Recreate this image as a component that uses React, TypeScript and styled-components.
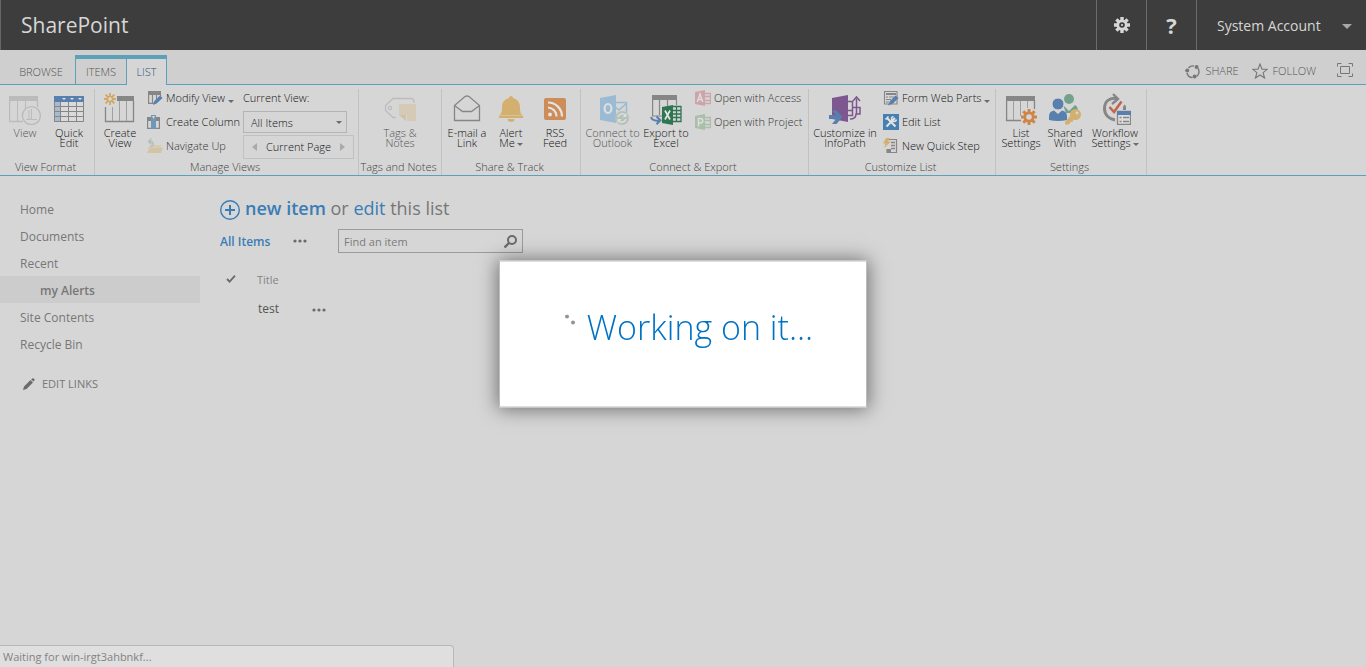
import React from "react";
import styled, { createGlobalStyle } from "styled-components";

const Global = createGlobalStyle`
  * { box-sizing: border-box; }
  body {
    margin: 0;
    min-height: 100vh;
    background: #d6d6d6;
    color: #777;
    font: 12px/16px "Open Sans", "Noto Sans", sans-serif;
  }
  button, input, select { font: inherit; color: inherit; }
  button { border: 0; padding: 0; background: none; cursor: pointer; }
  a { color: inherit; text-decoration: none; }
  h1, h2, p { margin: 0; font-weight: inherit; }
  svg { display: block; flex: none; }
`;

/* ---------- suite bar ---------- */
const SuiteBar = styled.header`
  display: flex;
  align-items: stretch;
  height: 50px;
  background: #3d3d3d;
  border-left: 1px solid #666;
  color: #d6d6d6;
`;
const Brand = styled.a`
  flex: 1;
  padding-left: 20px;
  font-size: 21px;
  line-height: 50px;
`;
const SuiteButton = styled.button`
  display: flex;
  align-items: center;
  justify-content: center;
  width: 50px;
  border-left: 1px solid #6b6b6b;
  font-size: 22px;
  font-weight: 700;
`;
const AccountButton = styled(SuiteButton)`
  width: 170px;
  justify-content: space-between;
  padding: 2px 14px 0 20px;
  font-size: 14px;
  font-weight: 400;
`;

/* ---------- ribbon tabs ---------- */
const TabRow = styled.div`
  display: flex;
  align-items: flex-end;
  height: 35px;
  background: #cfcfcf;
  box-shadow: inset 0 -1px #5ba2b8;
  color: #555;
  font-weight: 300;
`;
const Tabs = styled.nav`
  display: flex;
  flex: 1;
  padding-left: 7px;
`;
const Tab = styled.button<{ $w: number; $kind?: "first" | "active" }>`
  width: ${(p) => p.$w}px;
  height: 30px;
  padding-top: ${(p) => (p.$kind ? 0 : 4)}px;
  font-size: 11px;
  border-top: ${(p) => (p.$kind ? "4px solid #5ba2b8" : "0")};
  border-left: ${(p) => (p.$kind ? "1px solid #5ba2b8" : "0")};
  border-right: ${(p) => (p.$kind === "active" ? "1px solid #5ba2b8" : "0")};
  background: ${(p) => (p.$kind === "active" ? "#d6d6d6" : "transparent")};
  color: ${(p) => (p.$kind === "active" ? "#2f5580" : "#555")};
`;
const PageActions = styled.div`
  display: flex;
  align-items: center;
  gap: 13px;
  height: 28px;
  padding-right: 13px;
`;
const PageAction = styled.button`
  display: flex;
  align-items: center;
  gap: 5px;
  font-size: 11px;
`;
const FocusAction = styled(PageAction)`
  margin: 0 0 3px 8px;
`;

/* ---------- ribbon ---------- */
const Ribbon = styled.div`
  display: flex;
  height: 91px;
  border-bottom: 1px solid #5ba2b8;
  color: #444;
  font-weight: 300;
`;
const Group = styled.section<{ $w: number }>`
  display: flex;
  flex-direction: column;
  flex: none;
  width: ${(p) => p.$w}px;
  margin-top: 4px;
  border-right: 1px solid #c2c2c2;
`;
const GroupBody = styled.div<{ $center?: boolean }>`
  display: flex;
  height: 70px;
  padding-left: ${(p) => (p.$center ? 0 : 3)}px;
  justify-content: ${(p) => (p.$center ? "center" : "flex-start")};
`;
const GroupLabel = styled.h2`
  padding-right: 3px;
  font-size: 11px;
  line-height: 16px;
  text-align: center;
  white-space: nowrap;
`;
const BigButton = styled.button<{ $w: number }>`
  display: flex;
  flex-direction: column;
  align-items: center;
  flex: none;
  width: ${(p) => p.$w}px;
  padding-top: 4px;
  gap: 3px;
  color: #111;
  font-size: 11px;
  line-height: 10px;
  white-space: nowrap;
  &:disabled { color: #555; }
`;
const SmallColumn = styled.div<{ $gap?: number; $w?: number }>`
  display: flex;
  flex-direction: column;
  width: ${(p) => (p.$w ? p.$w + "px" : "auto")};
  margin-left: ${(p) => p.$gap ?? 5}px;
  margin-top: -3px;
`;
const SmallButton = styled.button`
  display: flex;
  align-items: center;
  gap: 3px;
  height: 24px;
  color: #111;
  font-size: 11px;
  white-space: nowrap;
  &:disabled { color: #333; }
`;
const ViewPicker = styled.div`
  display: flex;
  flex-direction: column;
  width: 111px;
  margin-left: 7px;
  margin-top: -3px;
  color: #111;
  font-size: 11px;
`;
const PickerLabel = styled.label`
  height: 26px;
  line-height: 24px;
`;
const SelectWrap = styled.div`
  display: flex;
  align-items: center;
  width: 104px;
  height: 22px;
  padding-right: 4px;
  border: 1px solid #b4b4b4;
  margin-bottom: 2px;
`;
const Select = styled.select`
  appearance: none;
  flex: 1;
  height: 20px;
  padding: 2px 0 0 7px;
  border: 0;
  background: none;
`;
const Pager = styled.div`
  display: flex;
  align-items: center;
  justify-content: space-between;
  height: 24px;
  padding: 0 8px;
  border: 1px solid #c0c0c0;
`;

/* ---------- page body ---------- */
const Body = styled.div`
  display: flex;
  padding-top: 19px;
`;
const Side = styled.nav`
  flex: none;
  width: 200px;
`;
const NavLink = styled.a<{ $current?: boolean }>`
  display: block;
  padding: 2px 0 0 ${(p) => (p.$current ? 40 : 20)}px;
  line-height: 25px;
  background: ${(p) => (p.$current ? "#cccccc" : "none")};
  font-weight: ${(p) => (p.$current ? 600 : 400)};
`;
const EditLinks = styled.button`
  display: flex;
  align-items: center;
  gap: 7px;
  padding: 19px 0 0 22px;
  font-size: 11px;
`;
const Main = styled.main`
  flex: 1;
  padding-left: 20px;
`;
const Hero = styled.h1`
  display: flex;
  align-items: center;
  gap: 5px;
  height: 26px;
  font-size: 18px;
  a { color: #3a7cb5; }
  a:first-child { font-weight: 600; }
`;
const HeroIcon = styled.span`
  padding-top: 3px;
`;
const Toolbar = styled.div`
  display: flex;
  align-items: center;
  height: 24px;
  margin-top: 8px;
`;
const ViewLink = styled.a`
  width: 73px;
  padding-top: 2px;
  color: #3a7cb5;
  font-weight: 600;
`;
const SearchBox = styled.form`
  display: flex;
  align-items: center;
  width: 185px;
  height: 24px;
  margin-left: 31px;
  padding: 0 5px;
  border: 1px solid #9b9b9b;
`;
const SearchInput = styled.input`
  flex: 1;
  min-width: 0;
  padding: 2px 0 0;
  border: 0;
  background: none;
  font-size: 11px;
  &::placeholder { color: #7b7b7b; opacity: 1; }
`;
const Table = styled.table`
  margin-top: 12px;
  border-collapse: collapse;
  th, td { height: 29px; padding: 0; text-align: left; font-weight: 400; }
  th { font-size: 11px; color: #848484; }
  td { color: #555; }
  th:first-child { width: 37px; padding-left: 6px; }
  th:nth-child(2) { width: 55px; }
  td:nth-child(2) { padding-left: 1px; }
  td:last-child { padding-top: 3px; }
`;
const DotsButton = styled.button`
  display: block;
`;

/* ---------- overlays ---------- */
const Dialog = styled.div`
  position: fixed;
  top: 50%;
  left: 50%;
  transform: translate(-50%, -50%);
  display: flex;
  justify-content: center;
  gap: 11px;
  width: 368px;
  height: 147px;
  padding: 41px 0 0 12px;
  background: #fff;
  border: 1px solid #bdbdbd;
  box-shadow: 0 0 18px 1px rgba(0, 0, 0, 0.5);
  color: #0072c6;
  font-size: 34px;
  font-weight: 300;
  line-height: 48px;
  white-space: nowrap;
`;
const Spinner = styled.span`
  padding-top: 12px;
`;
const StatusBar = styled.div`
  position: fixed;
  left: 0;
  bottom: 0;
  width: 454px;
  height: 22px;
  padding-left: 3px;
  background: #dfdfdf;
  border: solid #b8b8b8;
  border-width: 1px 1px 0 0;
  border-top-right-radius: 4px;
  color: #828282;
  font-size: 11px;
  line-height: 22px;
`;

/* ---------- icons ---------- */
const G = "#868686";

const Svg = ({ w = 32, h = w, children }: { w?: number; h?: number; children: React.ReactNode }) => (
  <svg width={w} height={h} viewBox={`0 0 ${w} ${h}`} fill="none" aria-hidden="true">
    {children}
  </svg>
);

const Caret = ({ w = 6, color = "#6b6b6b" }: { w?: number; color?: string }) => (
  <svg width={w} height={w / 2} viewBox="0 0 6 3" aria-hidden="true">
    <path d="M0 0h6L3 3z" fill={color} />
  </svg>
);
const InlineCaret = styled.span`
  display: inline-block;
  margin-left: 2px;
  vertical-align: middle;
`;
const DropCaret = styled.span`
  padding: 6px 0 0;
`;

const Dots = () => (
  <Svg w={14} h={4}>
    <circle cx="2" cy="2" r="1.6" fill="#6b6b6b" />
    <circle cx="7" cy="2" r="1.6" fill="#6b6b6b" />
    <circle cx="12" cy="2" r="1.6" fill="#6b6b6b" />
  </Svg>
);

const GearIcon = () => (
  <Svg w={16}>
    <g stroke="#d6d6d6" strokeWidth="3.4">
      <path d="M8 0v16M0 8h16M2.4 2.4l11.2 11.2M13.6 2.4L2.4 13.6" />
    </g>
    <circle cx="8" cy="8" r="5.6" fill="#d6d6d6" />
    <circle cx="8" cy="8" r="2.8" fill="#3d3d3d" />
    <circle cx="8" cy="8" r="1.1" fill="#d6d6d6" />
  </Svg>
);

const ShareIcon = () => (
  <Svg w={15}>
    <path d="M3.500 4A5.800 5.800 0 0 1 9 2M13 4.500a5.800 5.800 0 0 1-1.500 8M7.500 13.600A5.800 5.800 0 0 1 2 9" stroke="#777" strokeWidth="1.400" />
    <circle cx="11.600" cy="3" r="2" fill="#777" />
    <circle cx="2.200" cy="6.600" r="2" fill="#777" />
    <circle cx="9.600" cy="12.600" r="2" fill="#777" />
  </Svg>
);
const StarIcon = () => (
  <Svg w={16}>
    <path d="M8 1l2 5.100 5.200.2-4.100 3.400 1.500 5.300L8 12l-4.600 3 1.500-5.300L.8 6.300 6 6.100z" stroke="#777" strokeWidth="1.100" />
  </Svg>
);
const FocusIcon = () => (
  <Svg w={16} h={14}>
    <path d="M.5 3.500v-3h4M11.500.5h4v3M15.500 10.500v3h-4M4.500 13.500h-4v-3" stroke="#777" />
    <path d="M3.500 3.500h9v7h-9z" stroke="#777" />
  </Svg>
);

const ViewIcon = () => (
  <Svg>
    <g stroke="#bbb">
      <path d="M.5 7v21.500H14M28.500 7v7" strokeWidth="1.400" />
      <path d="M8.500 8v20M16.500 8v8" />
      <path d="M22.500 16v10M17 26.500h11M20 26v-9" />
      <circle cx="22.400" cy="22.600" r="9" strokeWidth="1.400" />
    </g>
    <path d="M0 3h29v5H0z" fill="#bbb" />
  </Svg>
);
const QuickEditIcon = () => (
  <Svg>
    <path d="M1 3h30v26H1z" fill="#dadada" />
    <path d="M1 9h6v20H1z" fill="#a8bacb" />
    <path d="M1 3h30v6H1z" fill="#587fae" />
    <path d="M9 5h4l-2 2zM17 5h4l-2 2zM25 5h4l-2 2z" fill="#e4e4e4" />
    <path d="M1.500 9v19.500h29V9M7.500 9v20M15.500 9v20M23.500 9v20M1 13.500h30M1 18.500h30M1 23.500h30" stroke={G} />
  </Svg>
);
const CreateViewIcon = () => (
  <Svg>
    <path d="M13 3h17v5H13z" fill={G} />
    <path d="M1.500 14v14.500h28V8" stroke={G} strokeWidth="1.300" />
    <path d="M8.500 14v14M15.500 8v20M22.500 8v20" stroke="#a0a0a0" />
    <path d="M6 0v4M6 8v4M0 6h4M8 6h4M1.600 1.600l3 3M7.400 7.400l3 3M10.400 1.600l-3 3M4.600 7.400l-3 3" stroke="#d2a85e" strokeWidth="1.800" />
    <circle cx="6" cy="6" r="2.600" stroke="#d2a85e" strokeWidth="1.400" />
  </Svg>
);
const ModifyIcon = () => (
  <Svg w={16}>
    <path d="M1 1h13v4H1z" fill={G} />
    <path d="M1.600 4v9.400H7M5.500 5v8M9.500 5v4M13.500 4v2" stroke={G} strokeWidth="1.200" />
    <path d="M6 15l1.400-4L13 5.500l2.600 2.500-6 5.600z" fill="#587fae" />
  </Svg>
);
const ColumnIcon = () => (
  <Svg w={16}>
    <path d="M0 3h13v4H0z" fill={G} />
    <path d="M.6 4v10.400h11.800V4" stroke={G} strokeWidth="1.200" />
    <path d="M4 1h5v14H4z" fill="#7296b8" />
    <path d="M5 2h3L6.500 5z" fill="#d6d6d6" />
  </Svg>
);
const NavigateIcon = () => (
  <Svg w={16}>
    <path d="M1 9h4l1-2h8v8H1z" fill="#d8cbb2" />
    <path d="M0 15l3-5h13l-2 5z" fill="#d3c4a6" />
    <path d="M3 8.500c4 0 4-4 1-5H2M4.500.5L1.500 3.500l3 3" stroke="#b3beb9" strokeWidth="1.400" />
  </Svg>
);
const TagsIcon = () => (
  <Svg>
    <path d="M12 24.500H9L1.500 17.500v-5L9 5.500h18a3 3 0 0 1 3 3V10" stroke="#bcbcbc" strokeWidth="1.300" />
    <circle cx="6" cy="15" r="1.700" stroke="#bcbcbc" strokeWidth="1.200" />
    <path d="M15 11h17v17h-9v-6h-8z" fill="#d5cab5" />
    <path d="M15 22h7v6z" fill="#d0c2a5" />
  </Svg>
);
const MailIcon = () => (
  <Svg>
    <path d="M3.500 12.500L14 3.500q2-1 4 0l10.500 9v15h-25z" stroke={G} strokeWidth="1.300" />
    <path d="M3.500 12.500L11.500 18.500h9l8-6" stroke={G} strokeWidth="1.300" />
  </Svg>
);
const BellIcon = () => (
  <Svg>
    <path d="M16 3a2 2 0 0 1 2 2c4 1 7 4 7 9 0 4 0 6 3 9v2H4v-2c3-3 3-5 3-9 0-5 3-8 7-9a2 2 0 0 1 2-2z" fill="#d3b070" />
    <path d="M12.500 26h7a3.500 3 0 0 1-7 0z" fill="#d3b070" />
    <path d="M4 22.500h24" stroke="#d8c399" />
  </Svg>
);
const RssIcon = () => (
  <Svg>
    <rect x="5" y="5" width="22" height="22" rx="2" fill="#cd8d59" />
    <circle cx="11" cy="21.500" r="2" fill="#e4e4e4" />
    <path d="M9 14.500a9 9 0 0 1 8.500 9M9 9.500a14 14 0 0 1 14 14" stroke="#e4e4e4" strokeWidth="2.200" />
  </Svg>
);
const OutlookIcon = () => (
  <Svg>
    <path d="M18 9.500h11.500V24H18M18 14l4 3 8-7" stroke="#9bbbd4" strokeWidth="1.500" />
    <path d="M3 5l16-3v28L3 27z" fill="#9bbbd4" />
    <ellipse cx="11" cy="15.500" rx="3.400" ry="4.500" stroke="#dedede" strokeWidth="2.200" />
    <circle cx="25" cy="25" r="7" fill="#b5c2b9" />
    <path d="M21 24a4.300 4.300 0 0 1 7.500-1.500M29 26a4.300 4.300 0 0 1-7.500 1.500" stroke="#dedede" strokeWidth="1.500" />
    <path d="M29.500 20v4h-4zM20.500 30v-4h4z" fill="#dedede" />
  </Svg>
);
const ExcelIcon = () => (
  <Svg>
    <path d="M2 2h25v5H2z" fill={G} />
    <path d="M2.600 6v17H13M9.500 7v15M17.500 7v6M26.500 6v6" stroke={G} strokeWidth="1.200" />
    <path d="M22 13.500h9v15h-9M22 17.500h9M22 21h9M22 24.500h9M26.500 14v14" stroke="#2f7550" strokeWidth="1.300" />
    <path d="M12 14l11-2v20l-11-2z" fill="#2f7550" />
    <path d="M15 17.500l5 9M20 17.500l-5 9" stroke="#e4e4e4" strokeWidth="1.700" />
    <path d="M1 24c1 3 4 4 8 3.500M6.500 23.500l4 3.800-4 4" stroke="#587fae" strokeWidth="2" />
  </Svg>
);
const LetterIcon = ({ color, kind }: { color: string; kind: "access" | "project" }) => (
  <Svg w={16}>
    <path d="M8 3.500h7.500v10H8M10 6.500h5M10 10.500h5" stroke={color} strokeWidth="1.300" />
    <path d="M0 2l10-2v16L0 14z" fill={color} />
    {kind === "access" ? (
      <path d="M2.300 12L5 4l2.700 8M3.200 9.500h3.600" stroke="#dedede" strokeWidth="1.400" />
    ) : (
      <path d="M3.500 12.500v-8h2a2 2 0 0 1 0 4.500h-2" stroke="#dedede" strokeWidth="1.500" />
    )}
  </Svg>
);
const InfoPathIcon = () => (
  <Svg>
    <path d="M18 8.500h5.500v14H18M27.500 21V5.500M18 17.500h5.500M23.500 14.500h7.500v6.500h-4c0 3-2 5-6 5" stroke="#7c5790" strokeWidth="1.500" />
    <path d="M24 8l3.500-4L31 8" stroke="#7c5790" strokeWidth="1.500" />
    <path d="M3 5l16-3v27L3 26z" fill="#7c5790" />
    <path d="M0 22h7l-4-4.500h4.500l6 6.500-6 7H3l4-5H0z" fill="#587fae" />
  </Svg>
);
const WebPartsIcon = () => (
  <Svg w={16}>
    <path d="M1.500 1.500h12.500v12.500h-12.500z" stroke={G} strokeWidth="1.100" />
    <path d="M3 3h10v2H3z" fill={G} />
    <path d="M3 7h2M6 7h5M3 9.500h5M3 12h3" stroke={G} strokeWidth="1.200" />
    <path d="M5 15.500l2-4.500 5.500-5.500L15.500 8 10 13.500z" fill="#587fae" />
  </Svg>
);
const EditListIcon = () => (
  <Svg w={16}>
    <path d="M0 0h16v16H0z" fill="#467fb2" />
    <path d="M4 4l8.500 8.500M12 4l-8.500 8.500" stroke="#e4e4e4" strokeWidth="2" />
    <path d="M2.500 5.500l3-3M10.500 2.500a2.500 2.500 0 1 0 3 3" stroke="#e4e4e4" strokeWidth="1.600" />
  </Svg>
);
const QuickStepIcon = () => (
  <Svg w={16}>
    <path d="M6 1.500h7.500v13H4V11" stroke={G} strokeWidth="1.200" />
    <path d="M8 4.500h4M8 7.500h4M8 10.500h4" stroke={G} strokeWidth="1.300" />
    <path d="M4 11h4v4H4z" fill={G} />
    <path d="M3 0h4L5 3.500h3L1 10l1.500-4.500H0z" fill="#d3b070" />
  </Svg>
);
const ListSettingsIcon = () => (
  <Svg>
    <path d="M1 3h29v5H1z" fill={G} />
    <path d="M1.600 7v20.500H16M29.500 7v9" stroke={G} strokeWidth="1.300" />
    <path d="M8.500 8v19M15.500 8v15M22.500 8v7" stroke="#a0a0a0" />
    <path d="M24 16v16M16 24h16M18.300 18.300l11.400 11.400M29.700 18.300L18.300 29.700" stroke="#cd8549" strokeWidth="3" />
    <circle cx="24" cy="24" r="5.600" fill="#cd8549" />
    <circle cx="24" cy="24" r="2.800" fill="#d6d6d6" />
  </Svg>
);
const SharedIcon = () => (
  <Svg>
    <circle cx="20" cy="6" r="5" fill="#74a18c" />
    <path d="M14 12l6 6 6-6c2 1 3 3 3 6v2H17z" fill="#74a18c" />
    <circle cx="9" cy="11" r="6" fill="#587fae" stroke="#d6d6d6" />
    <path d="M0 27v-4c0-3 2-5 5-5.500l4 3.500 4-3.500c3 .5 5 2.500 5 5.500v4q-9 2-18 0z" fill="#587fae" />
    <path d="M22 22l-6 7 .5 3 4-1 1-2h2l1-3z" fill="#d3b070" />
    <circle cx="26.500" cy="21.500" r="5.500" fill="#d3b070" />
    <circle cx="28" cy="20" r="1.400" fill="#d6d6d6" />
  </Svg>
);
const WorkflowIcon = () => (
  <Svg>
    <path d="M18 5.500C10 4 5.500 9 5.500 15.500S10 26 16 27" stroke={G} strokeWidth="3" />
    <path d="M14 1l5 5-6 5" stroke={G} strokeWidth="2.400" />
    <path d="M10.500 14l4.500 5L22.500 8.500" stroke="#c0664c" strokeWidth="2.600" />
    <path d="M24 17v-3q2-5 3 0v3z" fill={G} />
    <path d="M18.500 18.500h13v13h-13z" fill="#dcdcdc" stroke={G} strokeWidth="1.300" />
    <path d="M18 18h14v4H18z" fill="#587fae" />
    <path d="M20.500 24.500h2M20.500 28.500h2M24 24.500h6M24 28.500h6" stroke={G} strokeWidth="1.400" />
  </Svg>
);
const PencilIcon = () => (
  <Svg w={13}>
    <path d="M1 12l1-3.500L8.500 2 11 4.500 4.500 11zM9.200 1.400l1-1q1-.6 1.900.3t.3 1.900l-1 1z" fill="#6b6b6b" />
  </Svg>
);
const PlusIcon = () => (
  <Svg w={20}>
    <circle cx="10" cy="10" r="9.300" stroke="#3a7cb5" strokeWidth="1.400" />
    <path d="M10 5v10M5 10h10" stroke="#3a7cb5" strokeWidth="2" />
  </Svg>
);
const SearchIcon = () => (
  <Svg w={13}>
    <circle cx="8" cy="5" r="4" stroke="#6b6b6b" strokeWidth="2" />
    <path d="M5 8l-4.500 4.500" stroke="#6b6b6b" strokeWidth="2.400" />
  </Svg>
);
const CheckIcon = () => (
  <Svg w={10} h={9}>
    <path d="M1 4l2.600 2.600L9 .6" stroke="#6b6b6b" strokeWidth="1.800" />
  </Svg>
);
const PageArrow = ({ flip }: { flip?: boolean }) => (
  <Svg w={6} h={8}>
    <path d={flip ? "M1 0v8l5-4z" : "M5 0v8L0 4z"} fill="#aaa" />
  </Svg>
);

/* ---------- page ---------- */
type BigProps = { icon: React.ReactNode; w?: number; lines: string[]; off?: boolean; menu?: boolean };
const Big = ({ icon, w = 44, lines, off, menu }: BigProps) => (
  <BigButton $w={w} disabled={off}>
    {icon}
    <span>
      {lines[0]}
      {lines[1] && <br />}
      {lines[1]}
      {menu && <InlineCaret><Caret /></InlineCaret>}
    </span>
  </BigButton>
);
type SmallProps = { icon: React.ReactNode; text: string; off?: boolean; menu?: boolean };
const Small = ({ icon, text, off, menu }: SmallProps) => (
  <SmallButton disabled={off}>
    {icon}
    <span>{text}</span>
    {menu && <DropCaret><Caret w={6} /></DropCaret>}
  </SmallButton>
);

export default function App() {
  return (
    <>
      <Global />
      <SuiteBar>
        <Brand href="#">SharePoint</Brand>
        <SuiteButton aria-label="Settings"><GearIcon /></SuiteButton>
        <SuiteButton aria-label="Help">?</SuiteButton>
        <AccountButton>
          System Account
          <Caret w={10} color="#a8a8a8" />
        </AccountButton>
      </SuiteBar>

      <TabRow>
        <Tabs>
          <Tab $w={68}>BROWSE</Tab>
          <Tab $w={51} $kind="first">ITEMS</Tab>
          <Tab $w={41} $kind="active">LIST</Tab>
        </Tabs>
        <PageActions>
          <PageAction><ShareIcon />SHARE</PageAction>
          <PageAction><StarIcon />FOLLOW</PageAction>
          <FocusAction aria-label="Focus on content"><FocusIcon /></FocusAction>
        </PageActions>
      </TabRow>

      <Ribbon>
        <Group $w={95}>
          <GroupBody>
            <Big icon={<ViewIcon />} lines={["View"]} off />
            <Big icon={<QuickEditIcon />} lines={["Quick", "Edit"]} />
          </GroupBody>
          <GroupLabel>View Format</GroupLabel>
        </Group>
        <Group $w={264}>
          <GroupBody>
            <Big icon={<CreateViewIcon />} lines={["Create", "View"]} />
            <SmallColumn $w={89}>
              <Small icon={<ModifyIcon />} text="Modify View" menu />
              <Small icon={<ColumnIcon />} text="Create Column" />
              <Small icon={<NavigateIcon />} text="Navigate Up" off />
            </SmallColumn>
            <ViewPicker>
              <PickerLabel htmlFor="view">Current View:</PickerLabel>
              <SelectWrap>
                <Select id="view"><option>All Items</option></Select>
                <Caret w={6} />
              </SelectWrap>
              <Pager>
                <button aria-label="Previous page"><PageArrow /></button>
                <span>Current Page</span>
                <button aria-label="Next page"><PageArrow flip /></button>
              </Pager>
            </ViewPicker>
          </GroupBody>
          <GroupLabel>Manage Views</GroupLabel>
        </Group>
        <Group $w={83}>
          <GroupBody $center>
            <Big icon={<TagsIcon />} lines={["Tags &", "Notes"]} off />
          </GroupBody>
          <GroupLabel>Tags and Notes</GroupLabel>
        </Group>
        <Group $w={139}>
          <GroupBody>
            <Big icon={<MailIcon />} lines={["E-mail a", "Link"]} />
            <Big icon={<BellIcon />} lines={["Alert", "Me"]} menu />
            <Big icon={<RssIcon />} lines={["RSS", "Feed"]} />
          </GroupBody>
          <GroupLabel>Share &amp; Track</GroupLabel>
        </Group>
        <Group $w={228}>
          <GroupBody>
            <Big icon={<OutlookIcon />} w={57} lines={["Connect to", "Outlook"]} off />
            <Big icon={<ExcelIcon />} w={50} lines={["Export to", "Excel"]} />
            <SmallColumn $gap={4}>
              <Small icon={<LetterIcon color="#cda4ab" kind="access" />} text="Open with Access" off />
              <Small icon={<LetterIcon color="#a9bfa9" kind="project" />} text="Open with Project" off />
            </SmallColumn>
          </GroupBody>
          <GroupLabel>Connect &amp; Export</GroupLabel>
        </Group>
        <Group $w={187}>
          <GroupBody>
            <Big icon={<InfoPathIcon />} w={66} lines={["Customize in", "InfoPath"]} />
            <SmallColumn>
              <Small icon={<WebPartsIcon />} text="Form Web Parts" menu />
              <Small icon={<EditListIcon />} text="Edit List" />
              <Small icon={<QuickStepIcon />} text="New Quick Step" />
            </SmallColumn>
          </GroupBody>
          <GroupLabel>Customize List</GroupLabel>
        </Group>
        <Group $w={151}>
          <GroupBody>
            <Big icon={<ListSettingsIcon />} lines={["List", "Settings"]} />
            <Big icon={<SharedIcon />} lines={["Shared", "With"]} />
            <Big icon={<WorkflowIcon />} w={56} lines={["Workflow", "Settings"]} menu />
          </GroupBody>
          <GroupLabel>Settings</GroupLabel>
        </Group>
      </Ribbon>

      <Body>
        <Side>
          <NavLink href="#">Home</NavLink>
          <NavLink href="#">Documents</NavLink>
          <NavLink href="#">Recent</NavLink>
          <NavLink href="#" $current>my Alerts</NavLink>
          <NavLink href="#">Site Contents</NavLink>
          <NavLink href="#">Recycle Bin</NavLink>
          <EditLinks><PencilIcon />EDIT LINKS</EditLinks>
        </Side>
        <Main>
          <Hero>
            <HeroIcon><PlusIcon /></HeroIcon>
            <span><a href="#">new item</a> or <a href="#edit">edit</a> this list</span>
          </Hero>
          <Toolbar>
            <ViewLink href="#">All Items</ViewLink>
            <DotsButton aria-label="More views"><Dots /></DotsButton>
            <SearchBox>
              <SearchInput aria-label="Find an item" placeholder="Find an item" />
              <button type="button" aria-label="Search"><SearchIcon /></button>
            </SearchBox>
          </Toolbar>
          <Table>
            <thead>
              <tr><th><CheckIcon /></th><th>Title</th><th /></tr>
            </thead>
            <tbody>
              <tr><td /><td>test</td><td><DotsButton aria-label="Item menu"><Dots /></DotsButton></td></tr>
            </tbody>
          </Table>
        </Main>
      </Body>

      <Dialog role="dialog" aria-label="Working on it">
        <Spinner>
          <Svg w={11} h={12}>
            <circle cx="2" cy="2" r="2" fill="#949494" />
            <circle cx="8" cy="8" r="2" fill="#949494" />
          </Svg>
        </Spinner>
        <p>Working on it...</p>
      </Dialog>
      <StatusBar>Waiting for win-irgt3ahbnkf...</StatusBar>
    </>
  );
}
